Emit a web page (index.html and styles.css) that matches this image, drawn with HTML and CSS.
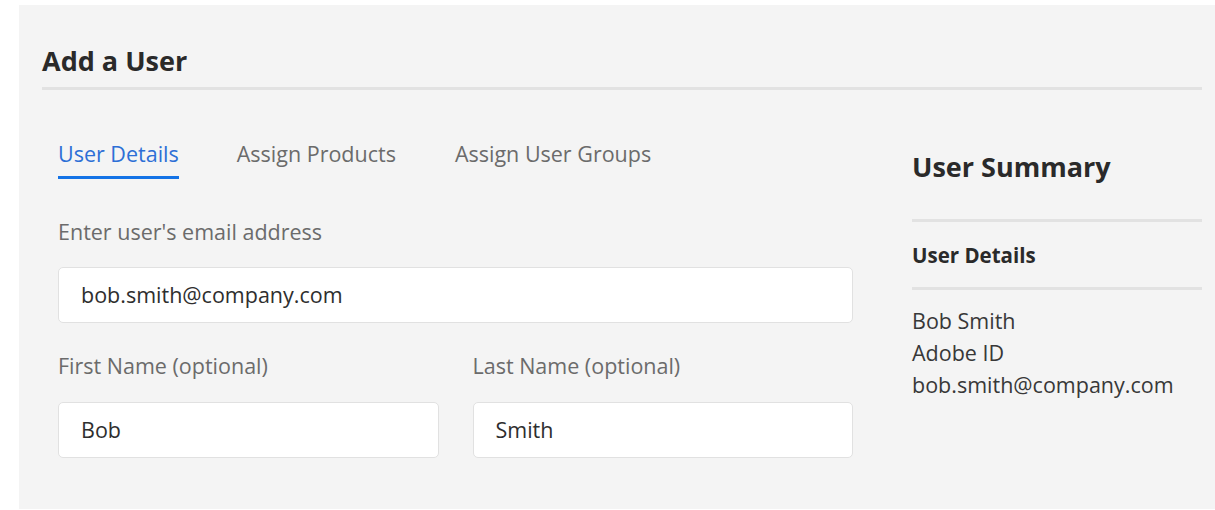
FILE: index.html
```html
<!DOCTYPE html>
<html lang="en">
<head>
<meta charset="utf-8">
<title>Add a User</title>
<link rel="stylesheet" href="styles.css">
</head>
<body>
  <div class="panel">
    <header class="panel-head">
      <h1 class="panel-title">Add a User</h1>
    </header>
    <div class="panel-body">
      <section class="main">
        <nav class="tabs">
          <a class="tab is-active">User Details</a>
          <a class="tab">Assign Products</a>
          <a class="tab">Assign User Groups</a>
        </nav>
        <div class="field field-email">
          <label class="field-label">Enter user's email address</label>
          <div class="input">bob.smith@company.com</div>
        </div>
        <div class="field-row">
          <div class="field">
            <label class="field-label">First Name (optional)</label>
            <div class="input">Bob</div>
          </div>
          <div class="field">
            <label class="field-label">Last Name (optional)</label>
            <div class="input">Smith</div>
          </div>
        </div>
      </section>
      <aside class="summary">
        <h2 class="summary-title">User Summary</h2>
        <h3 class="summary-section">User Details</h3>
        <ul class="summary-list">
          <li>Bob Smith</li>
          <li>Adobe ID</li>
          <li>bob.smith@company.com</li>
        </ul>
      </aside>
    </div>
  </div>
</body>
</html>
```
FILE: styles.css
```css
* {
  box-sizing: border-box;
}

html, body {
  margin: 0;
  padding: 0;
  background: #ffffff;
}

body {
  font-family: "Open Sans", "Noto Sans", sans-serif;
  color: #2c2c2c;
  overflow: hidden;
}

.panel {
  margin: 5px 0 0 19px;
  height: 504px;
  background: #f4f4f4;
  padding: 0 13px 0 23px;
}

.panel-head {
  padding-top: 38px;
  padding-bottom: 8px;
  border-bottom: 3px solid #e2e2e2;
}

.panel-title {
  margin: 0;
  font-size: 27px;
  line-height: 36px;
  font-weight: 700;
  color: #2a2a2a;
}

.panel-body {
  display: flex;
  gap: 59px;
  padding-left: 16px;
}

.main {
  width: 795px;
  padding-top: 50px;
}

.tabs {
  display: flex;
  gap: 58px;
}

.tab {
  font-size: 21.5px;
  line-height: 28px;
  color: #6b6b6b;
  padding-bottom: 8px;
  border-bottom: 3px solid transparent;
}

.tab + .tab + .tab {
  margin-left: 1px;
}

.tab.is-active {
  color: #2d6fd6;
  border-bottom-color: #1473e6;
}

.field-email {
  margin-top: 39px;
}

.field-label {
  display: block;
  font-size: 21.5px;
  line-height: 28px;
  color: #6b6b6b;
  margin-bottom: 21px;
}

.input {
  height: 56px;
  background: #ffffff;
  border: 1px solid #e1e1e1;
  border-radius: 5px;
  padding: 13px 22px;
  font-size: 21.5px;
  line-height: 28px;
  color: #2e2e2e;
}

.field-row {
  display: grid;
  grid-template-columns: 1fr 1fr;
  gap: 34px;
  margin-top: 29px;
}

.field-row .field-label {
  margin-bottom: 22px;
}

.summary {
  flex: 1;
  padding-top: 59px;
}

.summary-title {
  margin: 0;
  font-size: 27px;
  line-height: 36px;
  font-weight: 700;
  color: #2a2a2a;
  padding-bottom: 34px;
  border-bottom: 3px solid #e2e2e2;
}

.summary-section {
  margin: 0;
  padding: 19px 0 18px;
  font-size: 20.5px;
  line-height: 28px;
  font-weight: 700;
  color: #2a2a2a;
  border-bottom: 3px solid #e2e2e2;
}

.summary-list {
  list-style: none;
  margin: 0;
  padding: 15px 0 0;
}

.summary-list li {
  font-size: 21.5px;
  line-height: 32px;
  color: #383838;
}
```
